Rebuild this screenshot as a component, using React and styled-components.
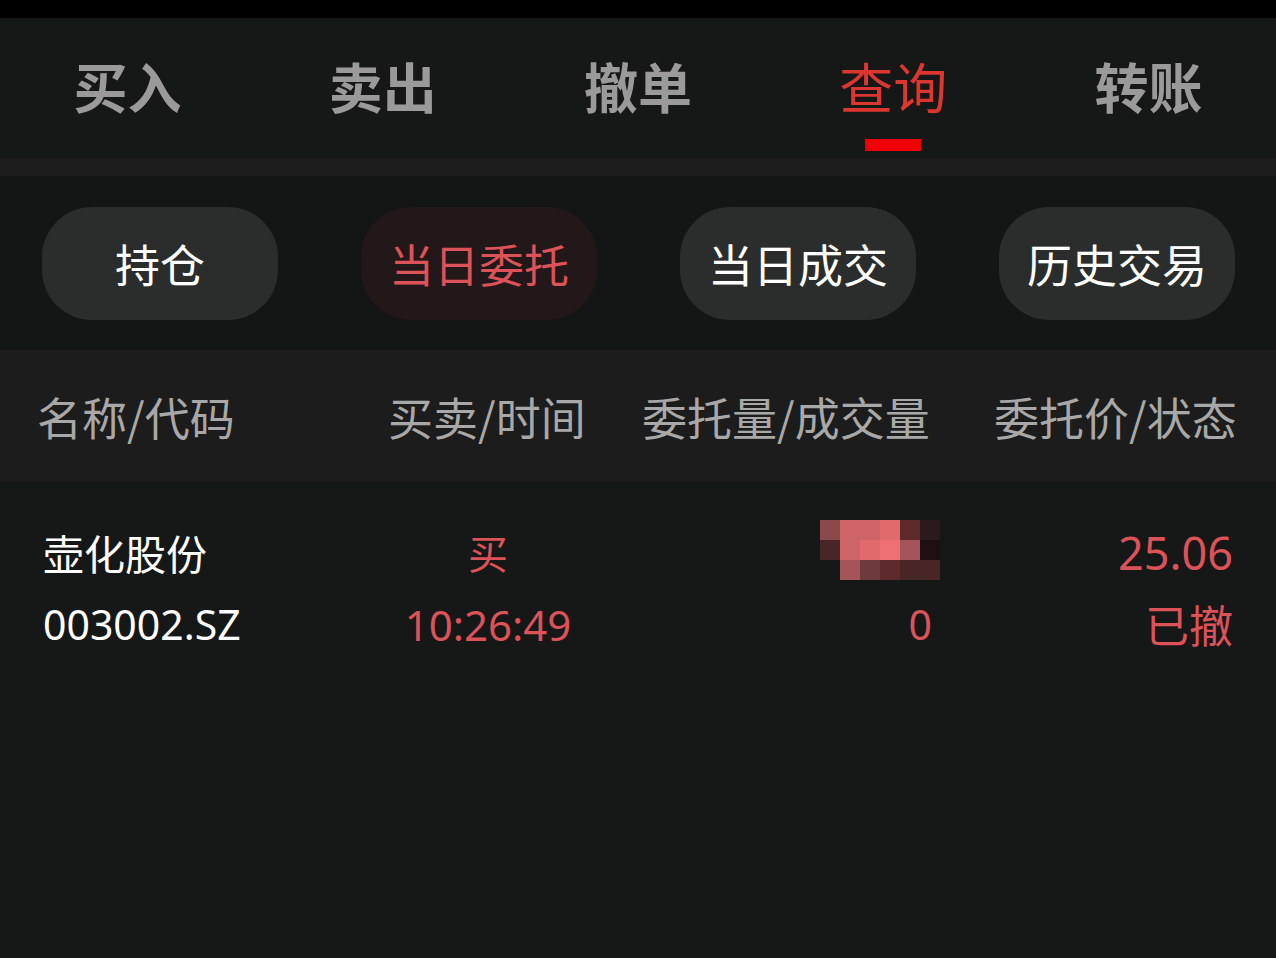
import React from 'react';
import styled, { createGlobalStyle } from 'styled-components';

const GlobalStyle = createGlobalStyle`
  html, body {
    margin: 0;
    padding: 0;
    background: #161717;
  }
  body {
    font-family: "Noto Sans", "Noto Sans CJK SC", sans-serif;
  }
`;

const Page = styled.div`
  width: 1276px;
  height: 958px;
  background: #161717;
  overflow: hidden;
`;

const StatusBar = styled.div`
  height: 18px;
  background: #000;
`;

// top tabs
const TabBar = styled.div`
  height: 140px;
  display: grid;
  grid-template-columns: repeat(5, 1fr);
  background: #161717;
`;

const Tab = styled.div`
  position: relative;
  display: flex;
  justify-content: center;
  align-items: center;
  padding-bottom: 5px;
  font-family: "Noto Sans CJK SC", sans-serif;
  font-size: 54px;
  font-weight: ${({ active }) => (active ? 400 : 700)};
  color: ${({ active }) => (active ? '#dc3630' : '#9a9a9a')};
`;

const Underline = styled.span`
  position: absolute;
  left: 50%;
  bottom: 7px;
  width: 56px;
  height: 12px;
  margin-left: -28px;
  background: #f00000;
`;

const Strip = styled.div`
  height: 18px;
  background: #1d1d1d;
`;

// sub tabs
const PillRow = styled.div`
  height: 174px;
  display: flex;
  align-items: center;
  justify-content: space-between;
  padding: 0 41px 0 42px;
  background: #141515;
`;

const Pill = styled.div`
  width: 236px;
  height: 113px;
  border-radius: 50px;
  display: flex;
  align-items: center;
  justify-content: center;
  font-family: "Noto Sans CJK SC", sans-serif;
  font-size: 45px;
  background: ${({ active }) => (active ? '#231819' : '#2b2d2d')};
  color: ${({ active }) => (active ? '#dc5259' : '#ffffff')};
`;

// table
const HeaderRow = styled.div`
  height: 132px;
  display: grid;
  grid-template-columns: 350px 276px 310px 1fr;
  align-items: center;
  background: #1c1c1c;
  font-family: "Noto Sans CJK SC", sans-serif;
  font-size: 45px;
  color: #a8a8a8;
`;

const HeadCell = styled.div`
  padding: ${({ pad }) => pad};
`;

const DataRow = styled.div`
  display: grid;
  grid-template-columns: 350px 276px 310px 1fr;
  padding-top: 34px;
`;

const Cell = styled.div`
  display: flex;
  flex-direction: column;
  align-items: ${({ align }) => align};
  padding: ${({ pad }) => pad};
`;

const Line = styled.div`
  height: 72px;
  display: flex;
  align-items: center;
  font-family: ${({ cjk }) => (cjk ? '"Noto Sans CJK SC", sans-serif' : '"Noto Sans", "Noto Sans CJK SC", sans-serif')};
  font-size: ${({ size }) => size || 41}px;
  color: ${({ red }) => (red ? '#dc5259' : '#ffffff')};
`;

const Mosaic = styled.div`
  display: grid;
  grid-template-columns: repeat(6, 20px);
  grid-auto-rows: 20px;
  margin-top: -4px;
  margin-right: -8px;
`;

const Tile = styled.span`
  background: ${({ c }) => c};
`;

const tabs = ['买入', '卖出', '撤单', '查询', '转账'];
const pills = ['持仓', '当日委托', '当日成交', '历史交易'];

const mosaic = [
  '#8a4a4c', '#cd6466', '#cd6466', '#e06a6c', '#5e2a2c', '#2a1a1b',
  '#482627', '#cd6466', '#e06a6c', '#ef7074', '#a4555a', '#1e1010',
  'transparent', '#a4555a', '#6e3a3d', '#5e2a2c', '#482627', '#482627',
];

export default function App() {
  return (
    <Page>
      <GlobalStyle />
      <StatusBar />
      <TabBar>
        {tabs.map((t, i) => (
          <Tab key={t} active={i === 3}>
            {t}
            {i === 3 && <Underline />}
          </Tab>
        ))}
      </TabBar>
      <Strip />
      <PillRow>
        {pills.map((p, i) => (
          <Pill key={p} active={i === 1}>{p}</Pill>
        ))}
      </PillRow>
      <HeaderRow>
        <HeadCell pad="0 0 0 37px">名称/代码</HeadCell>
        <HeadCell pad="0 0 0 38px">买卖/时间</HeadCell>
        <HeadCell pad="0 0 0 16px">委托量/成交量</HeadCell>
        <HeadCell pad="0 0 0 58px">委托价/状态</HeadCell>
      </HeaderRow>
      <DataRow>
        <Cell align="flex-start" pad="0 0 0 43px">
          <Line cjk>壶化股份</Line>
          <Line>003002.SZ</Line>
        </Cell>
        <Cell align="center" pad="0">
          <Line cjk red size={40}>买</Line>
          <Line red size={42}>10:26:49</Line>
        </Cell>
        <Cell align="flex-end" pad="0 4px 0 0">
          <Line>
            <Mosaic>
              {mosaic.map((c, i) => (
                <Tile key={i} c={c} />
              ))}
            </Mosaic>
          </Line>
          <Line red>0</Line>
        </Cell>
        <Cell align="flex-end" pad="0 43px 0 0">
          <Line red size={45}>25.06</Line>
          <Line cjk red size={44}>已撤</Line>
        </Cell>
      </DataRow>
    </Page>
  );
}
